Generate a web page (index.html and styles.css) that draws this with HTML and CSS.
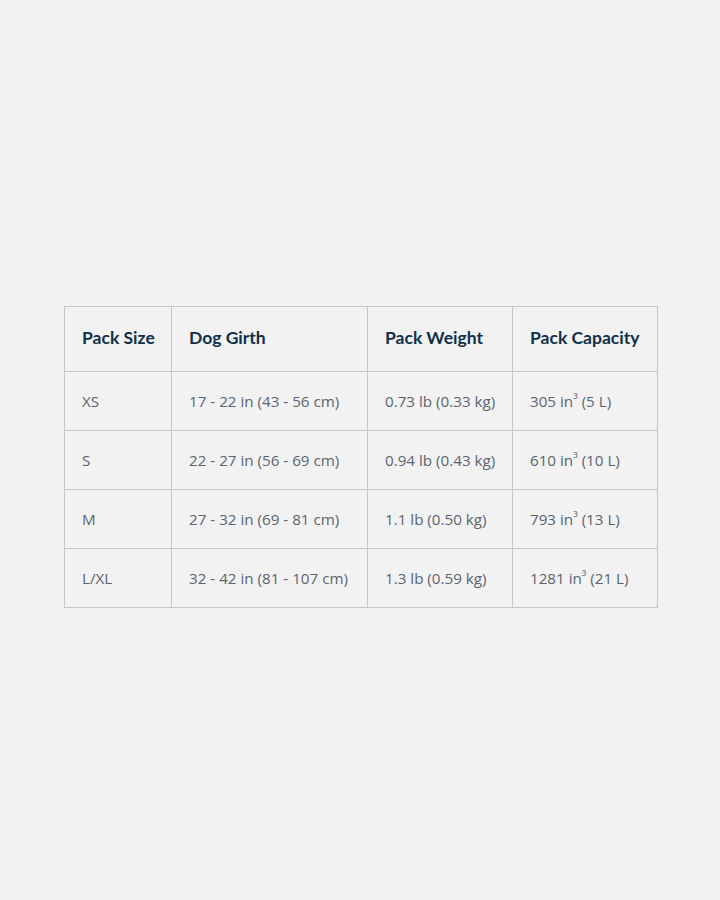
FILE: index.html
```html
<!DOCTYPE html>
<html>
<head>
<meta charset="utf-8">
<link rel="stylesheet" href="styles.css">
</head>
<body>
<main class="page">
  <table class="size-table">
    <colgroup>
      <col class="c1"><col class="c2"><col class="c3"><col class="c4">
    </colgroup>
    <thead>
      <tr><th>Pack Size</th><th>Dog Girth</th><th>Pack Weight</th><th>Pack Capacity</th></tr>
    </thead>
    <tbody>
      <tr><td>XS</td><td>17 - 22 in (43 - 56 cm)</td><td>0.73 lb (0.33 kg)</td><td>305 in<span class="sup">³</span> (5 L)</td></tr>
      <tr><td>S</td><td>22 - 27 in (56 - 69 cm)</td><td>0.94 lb (0.43 kg)</td><td>610 in<span class="sup">³</span> (10 L)</td></tr>
      <tr><td>M</td><td>27 - 32 in (69 - 81 cm)</td><td>1.1 lb (0.50 kg)</td><td>793 in<span class="sup">³</span> (13 L)</td></tr>
      <tr><td>L/XL</td><td>32 - 42 in (81 - 107 cm)</td><td>1.3 lb (0.59 kg)</td><td>1281 in<span class="sup">³</span> (21 L)</td></tr>
    </tbody>
  </table>
</main>
</body>
</html>
```
FILE: styles.css
```css
html, body {
  margin: 0;
  padding: 0;
  background: #f2f2f2;
}
.page {
  width: 720px;
  height: 900px;
  display: flex;
  align-items: flex-start;
  justify-content: flex-start;
  box-sizing: border-box;
  padding: 306px 0 0 64px;
}
.size-table {
  border-collapse: collapse;
  table-layout: fixed;
  width: 593px;
}
.c1 { width: 107px; }
.c2 { width: 196px; }
.c3 { width: 145px; }
.c4 { width: 145px; }
.size-table th,
.size-table td {
  border: 1px solid #c6c6c6;
  text-align: left;
  padding: 0 0 0 17px;
  white-space: nowrap;
}
.size-table th {
  height: 61px;
  padding-bottom: 3px;
  font-family: "Lato", "Noto Sans", sans-serif;
  font-weight: 700;
  font-size: 17.5px;
  color: #10304a;
}
.size-table td {
  height: 58px;
  font-family: "Open Sans", "Noto Sans", sans-serif;
  font-size: 15.2px;
  color: #5b6570;
}
.sup {
  font-size: 13px;
  vertical-align: 3px;
  line-height: 0;
}
```
